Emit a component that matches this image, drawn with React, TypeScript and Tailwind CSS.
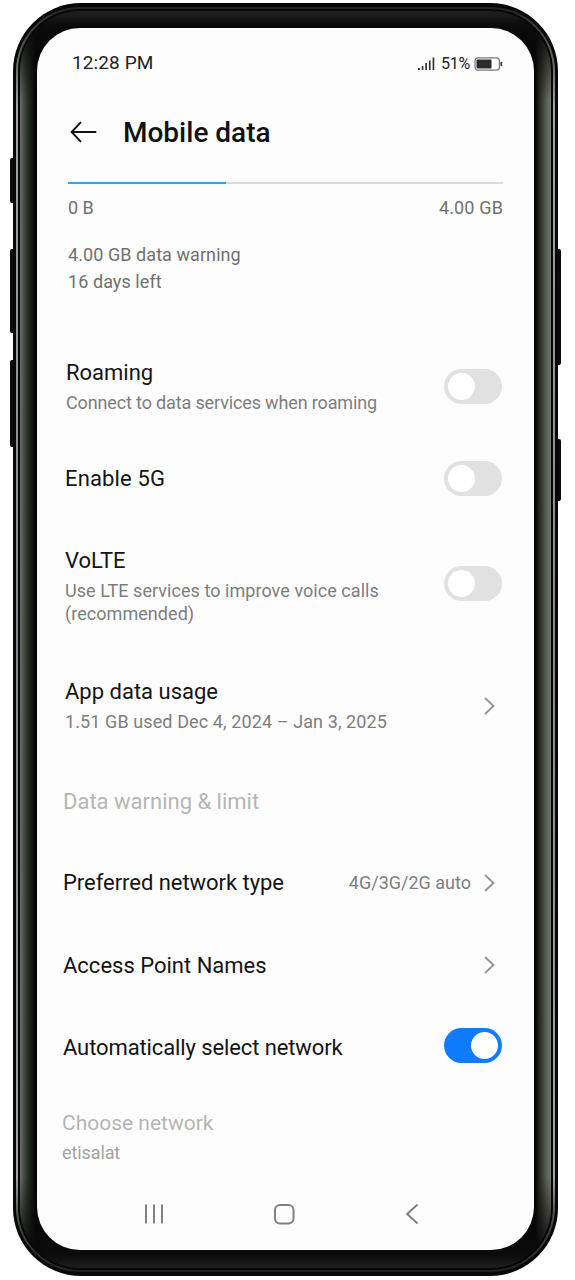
import type { ReactNode } from 'react'
import clsx from 'clsx'

function Toggle({ on = false }: { on?: boolean }) {
  return (
    <span
      className={clsx(
        'flex h-[35px] w-[58px] shrink-0 items-center rounded-full px-1',
        on ? 'justify-end bg-[#107bfd]' : 'bg-[#e1e1e1]'
      )}
    >
      <span className="size-[27px] rounded-full bg-white" />
    </span>
  )
}

function Chevron() {
  return (
    <svg width="12" height="20" viewBox="0 0 12 20" fill="none" className="mr-[7px] shrink-0">
      <path d="M2 2l8.5 8L2 18" stroke="#929292" strokeWidth="1.8" />
    </svg>
  )
}

type RowProps = {
  title: string
  sub?: ReactNode
  muted?: boolean
  className: string
  textClass?: string
  titleClass?: string
  subClass?: string
  children?: ReactNode
}

function Row({ title, sub, muted, className, textClass, titleClass = 'text-[22px]', subClass, children }: RowProps) {
  return (
    <div className={clsx('flex shrink-0 items-center justify-between pr-8', className)}>
      <div className={clsx('whitespace-nowrap', textClass)}>
        <div className={clsx('leading-[30px]', muted ? 'text-[#b5b5b5]' : 'text-[#141414]', titleClass)}>{title}</div>
        {sub && (
          <div className={clsx('mt-[3px] text-[18px] leading-[23px]', muted ? 'text-[#a3a3a3]' : 'text-[#7d7d7d]', subClass)}>
            {sub}
          </div>
        )}
      </div>
      {children}
    </div>
  )
}

function StatusBar() {
  return (
    <div className="flex h-[70px] shrink-0 items-center justify-between pr-[31px] pl-[35px] text-[#222]">
      <span className="text-[19px] tracking-[0.1px]">12:28 PM</span>
      <div className="flex items-center pt-0.5">
        <svg width="17" height="14" viewBox="0 0 17 14" fill="#333">
          <rect x="0" y="11" width="2" height="2" />
          <rect x="3.7" y="9" width="1.7" height="4" />
          <rect x="7.3" y="6" width="1.7" height="7" />
          <rect x="10.9" y="3.5" width="1.7" height="9.5" />
          <rect x="14.6" y="0.5" width="1.7" height="12.5" />
        </svg>
        <span className="mr-1 ml-1.5 text-[16px] tracking-[-0.2px]">51%</span>
        <svg width="29" height="14" viewBox="0 0 29 14" fill="none">
          <rect x="1" y="0.8" width="24.4" height="12.4" rx="3" stroke="#777" strokeWidth="1.2" />
          <rect x="2.5" y="2.5" width="15" height="9" rx="1" fill="#2b2b2b" />
          <rect x="26.5" y="4.8" width="1.7" height="4.4" rx="0.8" fill="#333" />
        </svg>
      </div>
    </div>
  )
}

function Header() {
  return (
    <div className="flex h-[68px] shrink-0 items-center pl-[33px]">
      <svg width="27" height="22" viewBox="0 0 27 22" fill="none" stroke="#111" strokeWidth="1.9" className="shrink-0">
        <path d="M26.3 11H2M11 1.2L1.6 11l9.4 9.8" />
      </svg>
      <h1 className="ml-[26px] pt-0.5 text-[28px] font-medium whitespace-nowrap text-[#111]">Mobile data</h1>
    </div>
  )
}

function Usage() {
  return (
    <div className="h-[164px] shrink-0 pt-4 pr-[31px] pl-[31px] text-[18px] text-[#707070]">
      <div className="h-0.5 bg-[#dcdcdc]">
        <div className="h-0.5 w-[158px] bg-[#33a1ef]" />
      </div>
      <div className="mt-2.5 flex justify-between leading-[27px]">
        <span>0 B</span>
        <span className="tracking-[0.15px]">4.00 GB</span>
      </div>
      <div className="mt-5 leading-[27px] tracking-[0.07px]">
        <p>4.00 GB data warning</p>
        <p>16 days left</p>
      </div>
    </div>
  )
}

function NavBar() {
  return (
    <div className="flex h-[51px] shrink-0 items-center pl-[107px]">
      <svg width="20" height="20" viewBox="0 0 20 20" stroke="#808080" strokeWidth="2">
        <path d="M2 0.5v19M10 0.5v19M18 0.5v19" />
      </svg>
      <svg width="22" height="22" viewBox="0 0 22 22" fill="none" className="ml-[109px]">
        <rect x="2" y="2" width="18.5" height="18.5" rx="5" stroke="#808080" strokeWidth="2" />
      </svg>
      <svg width="14" height="22" viewBox="0 0 14 22" fill="none" className="ml-[110px]">
        <path d="M12.5 1.5L2.2 11l10.3 9.5" stroke="#808080" strokeWidth="2" />
      </svg>
    </div>
  )
}

function Phone({ children }: { children: ReactNode }) {
  return (
    <div className="relative h-[1280px] w-[575px] bg-white pt-[3px] pl-[13px]">
      {/* side buttons */}
      <div className="absolute top-[158px] left-[10px] h-[45px] w-2 rounded-xs bg-[#0b0b0b]" />
      <div className="absolute top-[249px] left-[10px] h-[84px] w-2 rounded-xs bg-[#0b0b0b]" />
      <div className="absolute top-[360px] left-[10px] h-[87px] w-2 rounded-xs bg-[#0b0b0b]" />
      <div className="absolute top-[249px] left-[553px] h-[116px] w-2 rounded-xs bg-[#0b0b0b]" />
      <div className="absolute top-[439px] left-[553px] h-[62px] w-2 rounded-xs bg-[#0b0b0b]" />

      {/* metal rim, dark gap, then the bezel */}
      <div className="relative h-[1273px] w-[545px] rounded-[68px] bg-[#070807] px-[3px] py-1">
        <div className="h-full rounded-[64px] bg-[linear-gradient(to_bottom,#222421,#777b77_70px,#a2a3a2_100px,#85878a_50%,#a2a3a2_1170px,#444744_1215px,#20221f)] p-[2px]">
          <div className="h-full rounded-[62px] bg-[#060706] p-[2px]">
            <div className="h-full rounded-[60px] bg-[linear-gradient(to_bottom,#20231f,#0a0b0a_14px,transparent_90px,transparent_1165px,#0a0b0a_1244px,#1d201c),linear-gradient(to_right,#687069,#454b44_4px,#252823_9px,#000_16px,#000_515px,#2b2d27_520px,#5d6258_527px,#727970)] px-[17px] pt-[17px]">
              <div className="flex h-[1222px] w-[497px] flex-col overflow-hidden rounded-[43px] bg-[#fdfdfd]">
                {children}
              </div>
            </div>
          </div>
        </div>
      </div>
    </div>
  )
}

export default function App() {
  return (
    <div className="overflow-hidden font-[Roboto,sans-serif]">
      <Phone>
        <StatusBar />
        <Header />
        <Usage />
        <Row
          title="Roaming"
          sub="Connect to data services when roaming"
          className="h-[112px] pl-[29px]"
          subClass="tracking-[-0.14px]"
        >
          <Toggle />
        </Row>
        <Row title="Enable 5G" className="h-[72px] pl-7" textClass="pt-0.5" titleClass="text-[22px] tracking-[0.15px]">
          <Toggle />
        </Row>
        <Row
          title="VoLTE"
          sub={
            <>
              Use LTE services to improve voice calls
              <br />
              (recommended)
            </>
          }
          className="h-[138px] pl-7"
          textClass="pt-1"
          subClass="tracking-[0.05px]"
        >
          <Toggle />
        </Row>
        <Row
          title="App data usage"
          sub="1.51 GB used Dec 4, 2024 – Jan 3, 2025"
          className="h-[108px] pl-7"
          textClass="pb-0.5"
          subClass="tracking-[0.1px]"
        >
          <Chevron />
        </Row>
        <Row title="Data warning & limit" muted className="h-[84px] pl-[26px]" />
        <Row title="Preferred network type" className="h-[78px] pl-[26px]" titleClass="text-[22px] tracking-[-0.04px]">
          <div className="flex items-center">
            <span className="mr-3 pb-0.5 text-[18px] whitespace-nowrap text-[#7d7d7d]">4G/3G/2G auto</span>
            <Chevron />
          </div>
        </Row>
        <Row title="Access Point Names" className="h-[86px] pl-[26px]" textClass="pt-0.5">
          <Chevron />
        </Row>
        <Row
          title="Automatically select network"
          className="h-[75px] pl-[26px]"
          textClass="pt-1"
          titleClass="text-[22px] tracking-[-0.11px]"
        >
          <Toggle on />
        </Row>
        <Row
          title="Choose network"
          sub="etisalat"
          muted
          className="h-[105px] pl-[25px]"
          titleClass="text-[21px]"
          subClass="tracking-[-0.1px]"
        />
        <NavBar />
      </Phone>
    </div>
  )
}
